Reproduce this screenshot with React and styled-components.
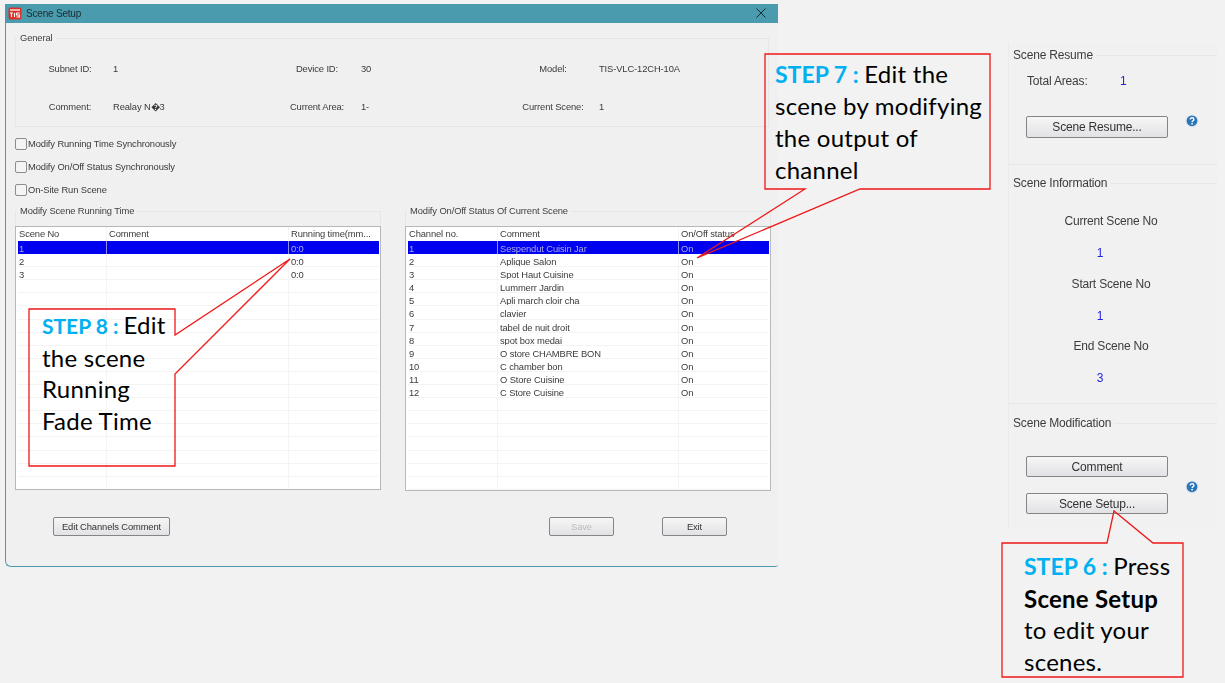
import React from "react";
import styled, { createGlobalStyle } from "styled-components";

const Global = createGlobalStyle`
  html, body { margin: 0; padding: 0; background: #f2f2f2; }
  * { box-sizing: border-box; }
`;

const Page = styled.div`
  position: relative;
  width: 1225px;
  height: 683px;
  overflow: hidden;
  display: flex;
  align-items: flex-start;
  padding: 4px 0 0 5px;
  background: #f2f2f2;
  font-family: "Liberation Sans", Arial, sans-serif;
  color: #3a3a3a;
`;

const Window = styled.div`
  width: 773px;
  height: 563px;
  background: #f0f0f0;
  border-left: 1px solid #4a9bad;
  border-bottom: 1px solid #4a9bad;
  border-bottom-left-radius: 6px;
  border-bottom-right-radius: 3px;
  font-size: 9.4px;
  letter-spacing: -0.12px;
  flex: none;
  filter: blur(0.3px);
`;

const TitleBar = styled.div`
  height: 19px;
  margin-left: -1px;
  background: #4a9bad;
  display: flex;
  align-items: center;
  padding: 0 12px 1px 3px;
  gap: 4px;
  color: #1c2b30;
  font-size: 10px;
  letter-spacing: -0.2px;
`;

const AppIcon = styled.svg`
  width: 14px;
  height: 13px;
  flex: none;
`;

const TitleText = styled.span`
  flex: 1;
`;

const CloseIcon = styled.svg`
  width: 10px;
  height: 10px;
  flex: none;
`;

const WindowBody = styled.div`
  padding: 9px 9px 0 9px;
`;

const Group = styled.fieldset`
  margin: 0;
  padding: 0;
  min-width: 0;
  flex: none;
  border: 1px solid #e6e6e6;
  height: ${(p) => p.$height}px;
  width: ${(p) => p.$width}px;
`;

const GroupLegend = styled.legend`
  margin-left: 1px;
  padding: 0 3px;
  height: 12px;
  line-height: 12px;
  color: #404040;
`;

const GeneralGrid = styled.div`
  display: grid;
  grid-template-columns: 83px 164px 84px 152px 86px 1fr;
  grid-auto-rows: 38px;
  align-items: center;
  padding: 5px 0 0 14px;
`;

const InfoLabel = styled.span`
  width: 80px;
  text-align: center;
  white-space: nowrap;
`;

const InfoValue = styled.span`
  white-space: nowrap;
`;

const CheckList = styled.div`
  display: flex;
  flex-direction: column;
  margin-top: 5px;
`;

const CheckRow = styled.label`
  height: 23px;
  display: flex;
  align-items: center;
  gap: 1px;
`;

const CheckBox = styled.span`
  width: 12px;
  height: 12px;
  border: 1px solid #8c8c8c;
  border-radius: 2px;
  background: #f4f4f4;
  flex: none;
`;

const TablesRow = styled.div`
  display: flex;
  gap: 24px;
  margin-top: 4px;
`;

const TableGroup = styled(Group)`
  border-bottom: none;
  height: auto;
`;

const Table = styled.div`
  margin: 9px -1px 0;
  height: ${(p) => p.$height}px;
  background: #fff;
  border: 1px solid #b8b8b8;
  overflow: hidden;
  padding: 0 1px 0 2px;
  color: #3a3a3a;
`;

const Row = styled.div`
  display: grid;
  grid-template-columns: ${(p) => p.$cols};
  height: ${(p) => (p.$head ? 14 : 13.1)}px;
  line-height: ${(p) => (p.$head ? 14 : 15)}px;
  background: ${(p) => (p.$selected ? "#0000f0" : "transparent")};
  color: ${(p) => (p.$selected ? "#a9a9e6" : "inherit")};
  border-bottom: ${(p) => (p.$selected || p.$head ? "none" : "1px solid #f4f4f4")};
`;

const Cell = styled.div`
  white-space: nowrap;
  overflow: hidden;
  border-left: 1px solid ${(p) => (p.$first ? "transparent" : p.$selected ? "#8f8fe8" : "#f4f4f4")};
  padding-left: ${(p) => (p.$first ? 0 : 2)}px;
`;

const Footer = styled.div`
  display: grid;
  grid-template-columns: 117px 1fr 65px 65px;
  column-gap: 48px;
  padding: 26px 42px 0 38px;
`;

const Btn = styled.button`
  height: ${(p) => p.$h || 19}px;
  width: ${(p) => (p.$w ? p.$w + "px" : "auto")};
  padding: 0;
  border: 1px solid #858585;
  border-radius: 2px;
  background: linear-gradient(#f6f6f6, #e2e2e6);
  font: inherit;
  letter-spacing: inherit;
  color: ${(p) => (p.disabled ? "#bcbcbc" : "#333")};
  white-space: nowrap;
`;

const Side = styled.div`
  margin-left: 230px;
  margin-top: 39px;
  width: 209px;
  flex: none;
  display: flex;
  flex-direction: column;
  font-size: 12px;
  letter-spacing: -0.18px;
  color: #3c3c3c;
  filter: blur(0.3px);
`;

const Section = styled.section`
  height: ${(p) => p.$height}px;
  padding-top: ${(p) => p.$top}px;
  background: #f1f1f1;
  border-left: 1px solid #ebebeb;
  border-bottom: ${(p) => (p.$last ? "none" : "1px solid #e8e8e8")};
`;

const SectionHead = styled.div`
  display: flex;
  align-items: center;
  gap: 3px;
  height: 14px;
  padding-left: 4px;
  &::after {
    content: "";
    flex: 1;
    height: 1px;
    background: #e8e8e8;
  }
`;

const Areas = styled.div`
  display: flex;
  margin: 12px 0 0 18px;
  height: 14px;
  line-height: 14px;
`;

const AreasLabel = styled.span`
  width: 93px;
`;

const BlueValue = styled.span`
  color: #2424dc;
`;

const ActionRow = styled.div`
  display: flex;
  gap: 17px;
  align-items: ${(p) => (p.$center ? "center" : "flex-start")};
  margin: ${(p) => p.$top}px 0 0 17px;
`;

const ButtonStack = styled.div`
  display: flex;
  flex-direction: column;
  gap: 16px;
`;

const HelpIcon = styled.svg`
  width: 14px;
  height: 14px;
  flex: none;
  margin-top: ${(p) => p.$drop || 0}px;
`;

const InfoStack = styled.div`
  margin-top: 16px;
  display: flex;
  flex-direction: column;
`;

const InfoName = styled.div`
  width: 204px;
  text-align: center;
  line-height: 31.3px;
  height: 31.3px;
`;

const InfoNumber = styled(BlueValue)`
  display: block;
  width: 182px;
  text-align: center;
  line-height: 31.3px;
  height: 31.3px;
  padding-top: 1px;
`;

const CalloutShapes = styled.svg`
  position: absolute;
  inset: 0;
  width: 1225px;
  height: 683px;
  pointer-events: none;
`;

const CalloutText = styled.div`
  position: absolute;
  left: ${(p) => p.$x}px;
  top: ${(p) => p.$y}px;
  font-family: Lato, "Noto Sans", sans-serif;
  font-size: 24px;
  letter-spacing: 0.25px;
  white-space: nowrap;
  line-height: ${(p) => p.$lh || 32}px;
  color: #000;
`;

const StepTag = styled.span`
  color: #00b0f0;
  font-weight: 700;
  font-size: ${(p) => p.$size || 23}px;
  letter-spacing: 0;
`;

const Strong = styled.b`
  font-weight: 700;
`;

const leftCols = "88px 182px 91px";
const rightCols = "89px 181px 91px";

const leftRows = [
  ["1", "", "0:0"],
  ["2", "", "0:0"],
  ["3", "", "0:0"],
  ...Array.from({ length: 16 }, () => ["", "", ""]),
];

const names = [
  "Sespendut Cuisin Jar",
  "Aplique Salon",
  "Spot Haut Cuisine",
  "Lummerr Jardin",
  "Apli march cloir cha",
  "clavier",
  "tabel de nuit droit",
  "spot box medai",
  "O store CHAMBRE BON",
  "C chamber bon",
  "O Store Cuisine",
  "C Store Cuisine",
];

const rightRows = [
  ...names.map((n, i) => [String(i + 1), n, "On"]),
  ...Array.from({ length: 7 }, () => ["", "", ""]),
];

function DataTable({ cols, head, rows, height }) {
  return (
    <Table $height={height}>
      <Row $cols={cols} $head>
        {head.map((h, i) => (
          <Cell key={i} $first={i === 0}>{h}</Cell>
        ))}
      </Row>
      {rows.map((r, i) => (
        <Row key={i} $cols={cols} $selected={i === 0}>
          {r.map((c, j) => (
            <Cell key={j} $first={j === 0} $selected={i === 0}>{c}</Cell>
          ))}
        </Row>
      ))}
    </Table>
  );
}

function Help({ drop }) {
  return (
    <HelpIcon viewBox="0 0 14 14" $drop={drop}>
      <circle cx="7" cy="7" r="6.6" fill="#e2e8ef" />
      <circle cx="7" cy="6.8" r="5.4" fill="#2a74b8" />
      <path d="M5.2 5.5c0-1.1.8-1.7 1.9-1.7s1.8.6 1.8 1.6c0 1.3-1.7 1.3-1.8 2.6" fill="none" stroke="#fff" strokeWidth="1.4" />
      <circle cx="7.1" cy="9.7" r=".9" fill="#fff" />
    </HelpIcon>
  );
}

export default function App() {
  return (
    <>
      <Global />
      <Page>
        <Window>
          <TitleBar>
            <AppIcon viewBox="0 0 14 13">
              <rect x="0.5" y="0.5" width="13" height="12" rx="2" fill="#d8322a" />
              <rect x="2" y="2" width="10" height="2" fill="#f3b0a8" />
              <path d="M2 6h3M3.5 6v4M6.5 6v4M8.5 6h3.2M8.5 6v2h3v2H8.5" fill="none" stroke="#fff" strokeWidth="1.1" />
            </AppIcon>
            <TitleText>Scene Setup</TitleText>
            <CloseIcon viewBox="0 0 10 10">
              <path d="M.5.5l9 9M9.5.5l-9 9" stroke="#1c2b30" strokeWidth="1" fill="none" />
            </CloseIcon>
          </TitleBar>
          <WindowBody>
            <Group $height={95} $width={754}>
              <GroupLegend>General</GroupLegend>
              <GeneralGrid>
                <InfoLabel>Subnet ID:</InfoLabel>
                <InfoValue>1</InfoValue>
                <InfoLabel>Device ID:</InfoLabel>
                <InfoValue>30</InfoValue>
                <InfoLabel>Model:</InfoLabel>
                <InfoValue>TIS-VLC-12CH-10A</InfoValue>
                <InfoLabel>Comment:</InfoLabel>
                <InfoValue>Realay N�3</InfoValue>
                <InfoLabel>Current Area:</InfoLabel>
                <InfoValue>1-</InfoValue>
                <InfoLabel>Current Scene:</InfoLabel>
                <InfoValue>1</InfoValue>
              </GeneralGrid>
            </Group>
            <CheckList>
              <CheckRow><CheckBox />Modify Running Time Synchronously</CheckRow>
              <CheckRow><CheckBox />Modify On/Off Status Synchronously</CheckRow>
              <CheckRow><CheckBox />On-Site Run Scene</CheckRow>
            </CheckList>
            <TablesRow>
              <TableGroup $width={366}>
                <GroupLegend>Modify Scene Running Time</GroupLegend>
                <DataTable
                  cols={leftCols}
                  head={["Scene No", "Comment", "Running time(mm..."]}
                  rows={leftRows}
                  height={264}
                />
              </TableGroup>
              <TableGroup $width={366}>
                <GroupLegend>Modify On/Off Status Of Current Scene</GroupLegend>
                <DataTable
                  cols={rightCols}
                  head={["Channel no.", "Comment", "On/Off status"]}
                  rows={rightRows}
                  height={265}
                />
              </TableGroup>
            </TablesRow>
            <Footer>
              <Btn>Edit Channels Comment</Btn>
              <span />
              <Btn disabled>Save</Btn>
              <Btn>Exit</Btn>
            </Footer>
          </WindowBody>
        </Window>
        <Side>
          <Section $height={122} $top={5}>
            <SectionHead>Scene Resume</SectionHead>
            <Areas>
              <AreasLabel>Total Areas:</AreasLabel>
              <BlueValue>1</BlueValue>
            </Areas>
            <ActionRow $top={28}>
              <Btn $w={142} $h={22}>Scene Resume...</Btn>
              <Help drop={-2} />
            </ActionRow>
          </Section>
          <Section $height={239} $top={11}>
            <SectionHead>Scene Information</SectionHead>
            <InfoStack>
              <InfoName>Current Scene No</InfoName>
              <InfoNumber>1</InfoNumber>
              <InfoName>Start Scene No</InfoName>
              <InfoNumber>1</InfoNumber>
              <InfoName>End Scene No</InfoName>
              <InfoNumber>3</InfoNumber>
            </InfoStack>
          </Section>
          <Section $height={124} $top={12} $last>
            <SectionHead>Scene Modification</SectionHead>
            <ActionRow $top={26} $center>
              <ButtonStack>
                <Btn $w={142} $h={21}>Comment</Btn>
                <Btn $w={142} $h={21}>Scene Setup...</Btn>
              </ButtonStack>
              <Help drop={3} />
            </ActionRow>
          </Section>
        </Side>
        <CalloutShapes viewBox="0 0 1225 683">
          <g fill="none" stroke="#f01818" strokeWidth="1.3">
            <path d="M765 54H990V189H860L697 258L805 189H765Z" />
            <path d="M29 309H175V335L290 259L175 374V466H29Z" />
            <path d="M1002 543H1107L1114 511L1153 543H1183V677H1002Z" />
          </g>
        </CalloutShapes>
        <CalloutText $x={775} $y={58}>
          <StepTag>STEP 7 : </StepTag>Edit the<br />scene by modifying<br />the output of<br />channel
        </CalloutText>
        <CalloutText $x={42} $y={309} $lh={31.6}>
          <StepTag $size={21}>STEP 8 : </StepTag>Edit<br />the scene<br />Running<br />Fade Time
        </CalloutText>
        <CalloutText $x={1024} $y={550} $lh={31.6}>
          <StepTag>STEP 6 : </StepTag>Press<br /><Strong>Scene Setup</Strong><br />to edit your<br />scenes.
        </CalloutText>
      </Page>
    </>
  );
}
